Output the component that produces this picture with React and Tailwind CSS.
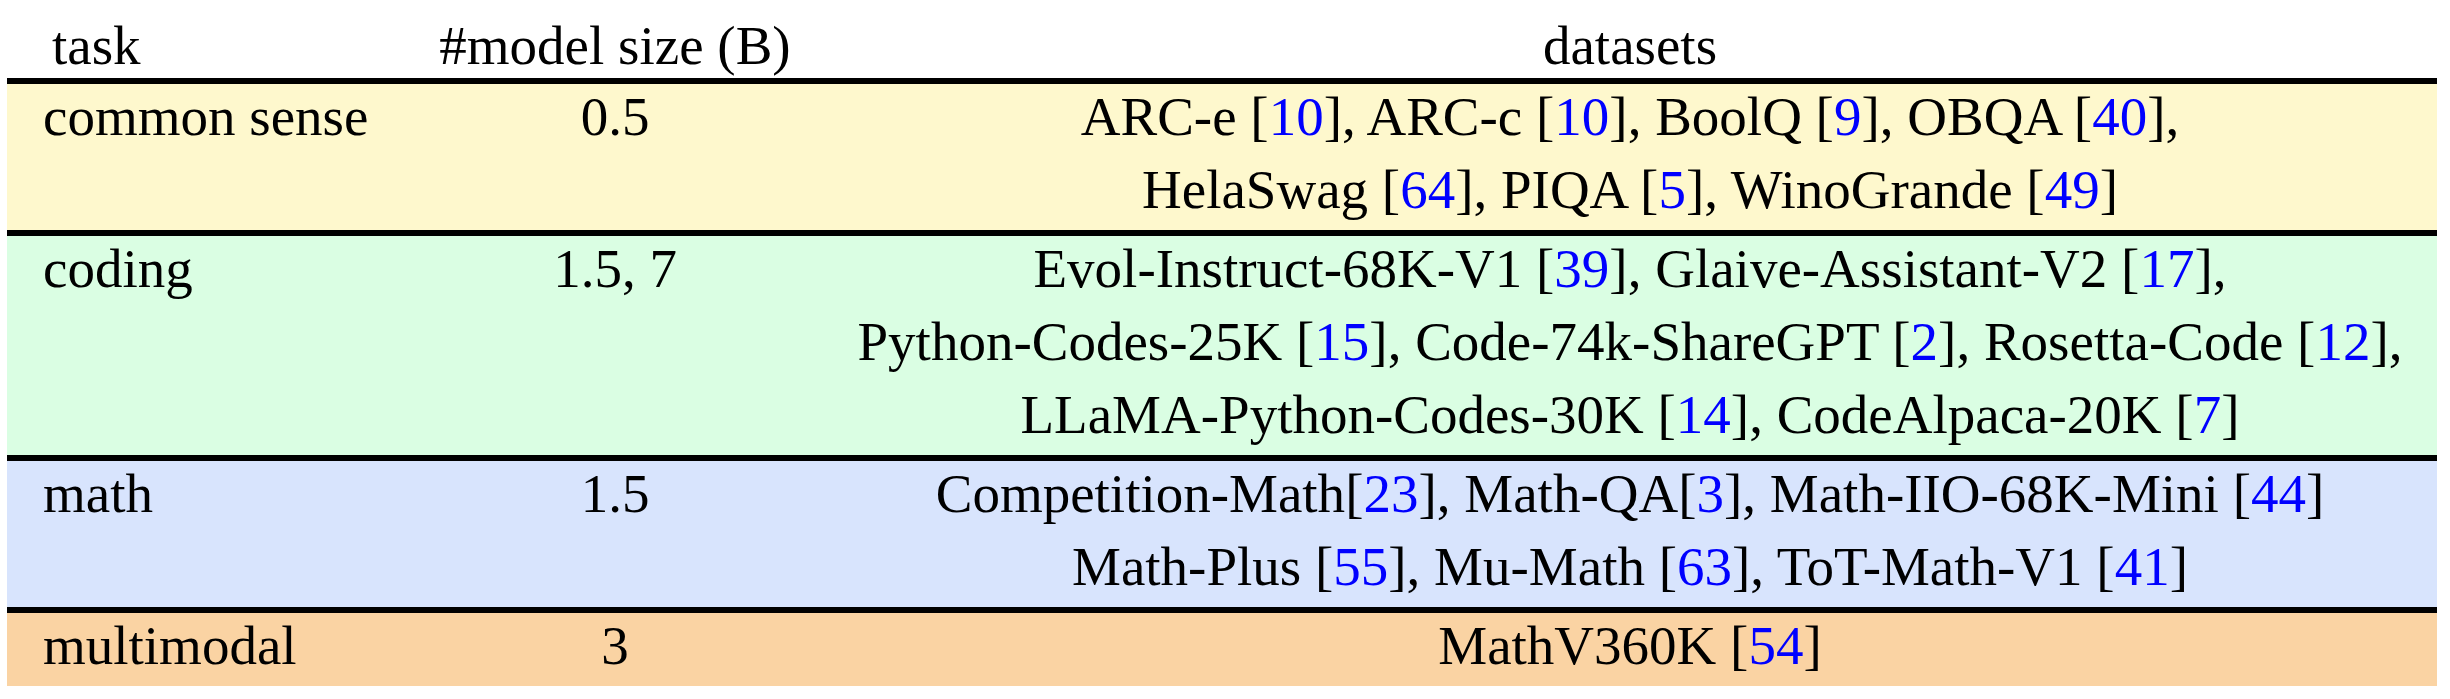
const serif = { fontFamily: '"Liberation Serif", "Times New Roman", serif' };

function C({ n }) {
  return (
    <>
      [<span className="text-[#0000ff]">{n}</span>]
    </>
  );
}

const rows = [
  {
    bg: "bg-[#fef8cd]",
    task: "common sense",
    size: "0.5",
    lines: [
      <>
        ARC-e <C n={10} />, ARC-c <C n={10} />, BoolQ <C n={9} />, OBQA <C n={40} />,
      </>,
      <>
        HelaSwag <C n={64} />, PIQA <C n={5} />, WinoGrande <C n={49} />
      </>,
    ],
  },
  {
    bg: "bg-[#dafee3]",
    task: "coding",
    size: "1.5, 7",
    lines: [
      <>
        Evol-Instruct-68K-V1 <C n={39} />, Glaive-Assistant-V2 <C n={17} />,
      </>,
      <>
        Python-Codes-25K <C n={15} />, Code-74k-ShareGPT <C n={2} />, Rosetta-Code <C n={12} />,
      </>,
      <>
        LLaMA-Python-Codes-30K <C n={14} />, CodeAlpaca-20K <C n={7} />
      </>,
    ],
  },
  {
    bg: "bg-[#d8e4fd]",
    task: "math",
    size: "1.5",
    lines: [
      <>
        Competition-Math<C n={23} />, Math-QA<C n={3} />, Math-IIO-68K-Mini <C n={44} />
      </>,
      <>
        Math-Plus <C n={55} />, Mu-Math <C n={63} />, ToT-Math-V1 <C n={41} />
      </>,
    ],
  },
  {
    bg: "bg-[#fad3a3]",
    task: "multimodal",
    size: "3",
    lines: [
      <>
        MathV360K <C n={54} />
      </>,
    ],
  },
];

export default function App() {
  return (
    <div className="min-h-screen bg-white text-black" style={serif}>
      <div className="ml-[7px] w-[2430px] whitespace-nowrap text-[55px]">
        {/* header */}
        <div className="grid h-[78px] grid-cols-[413px_390px_1627px] pt-[11px] leading-[70px]">
          <div className="pl-[45px]">task</div>
          <div className="text-center">#model size (B)</div>
          <div className="pl-[13px] text-center">datasets</div>
        </div>

        {rows.map((row) => (
          <div key={row.task} className="border-t-[6px] border-black">
            <div className={`grid grid-cols-[413px_390px_1627px] leading-[73px] ${row.bg}`}>
              <div className="-mt-[4px] pb-[4px] pl-[36px]">{row.task}</div>
              <div className="-mt-[4px] pb-[4px] text-center">{row.size}</div>
              <div className="-mt-[4px] pb-[4px] pl-[13px] text-center">
                {row.lines.map((line, i) => (
                  <div key={i}>{line}</div>
                ))}
              </div>
            </div>
          </div>
        ))}
      </div>
    </div>
  );
}
